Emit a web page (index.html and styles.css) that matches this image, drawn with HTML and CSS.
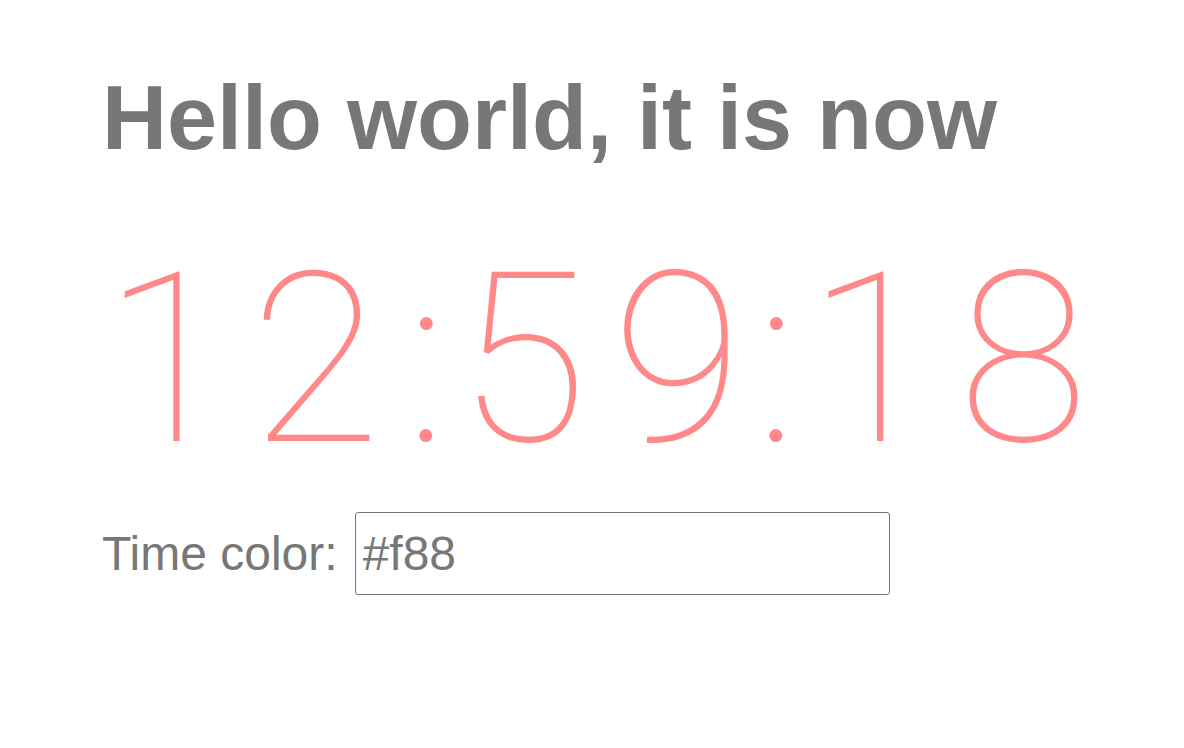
FILE: index.html
```html
<!DOCTYPE html>
<html>
<head>
<meta charset="utf-8">
<link rel="stylesheet" href="styles.css">
</head>
<body>
<div class="page">
  <h1 class="title">Hello world, it is now</h1>
  <div class="clock"><span class="tight">1</span>2<span class="colon">:</span>5<span class="tight-c">9</span><span class="colon">:</span><span class="tight-b">1</span>8</div>
  <div class="field">
    <label class="label" for="c">Time color:</label>
    <input class="input" id="c" type="text" value="#f88">
  </div>
</div>
</body>
</html>
```
FILE: styles.css
```css
html, body {
  margin: 0;
  padding: 0;
  background: #fff;
}
.page {
  padding: 66px 0 0 102px;
  font-family: "Liberation Sans", Arial, sans-serif;
  color: #777;
}
.title {
  margin: 0;
  font-size: 90px;
  font-weight: bold;
  line-height: 104px;
  color: #777;
}
.clock {
  margin-top: 71px;
  font-family: "Roboto", "Inter", sans-serif;
  font-weight: 100;
  font-size: 238px;
  line-height: 238px;
  letter-spacing: 25px;
  color: #f88;
  margin-left: 1px;
  white-space: nowrap;
}
.tight {
  letter-spacing: 17px;
}
.tight-b {
  letter-spacing: 21px;
}
.tight-c {
  letter-spacing: 13px;
}
.colon {
  letter-spacing: 9px;
}
.field {
  margin-top: 33px;
  display: flex;
  align-items: center;
  gap: 17px;
}
.label {
  font-size: 48px;
}
.input {
  box-sizing: border-box;
  width: 535px;
  height: 83px;
  border: 1.5px solid #777;
  border-radius: 3px;
  padding: 0 7px;
  font-family: "Liberation Sans", Arial, sans-serif;
  font-size: 48px;
  color: #777;
  outline: none;
}
```
